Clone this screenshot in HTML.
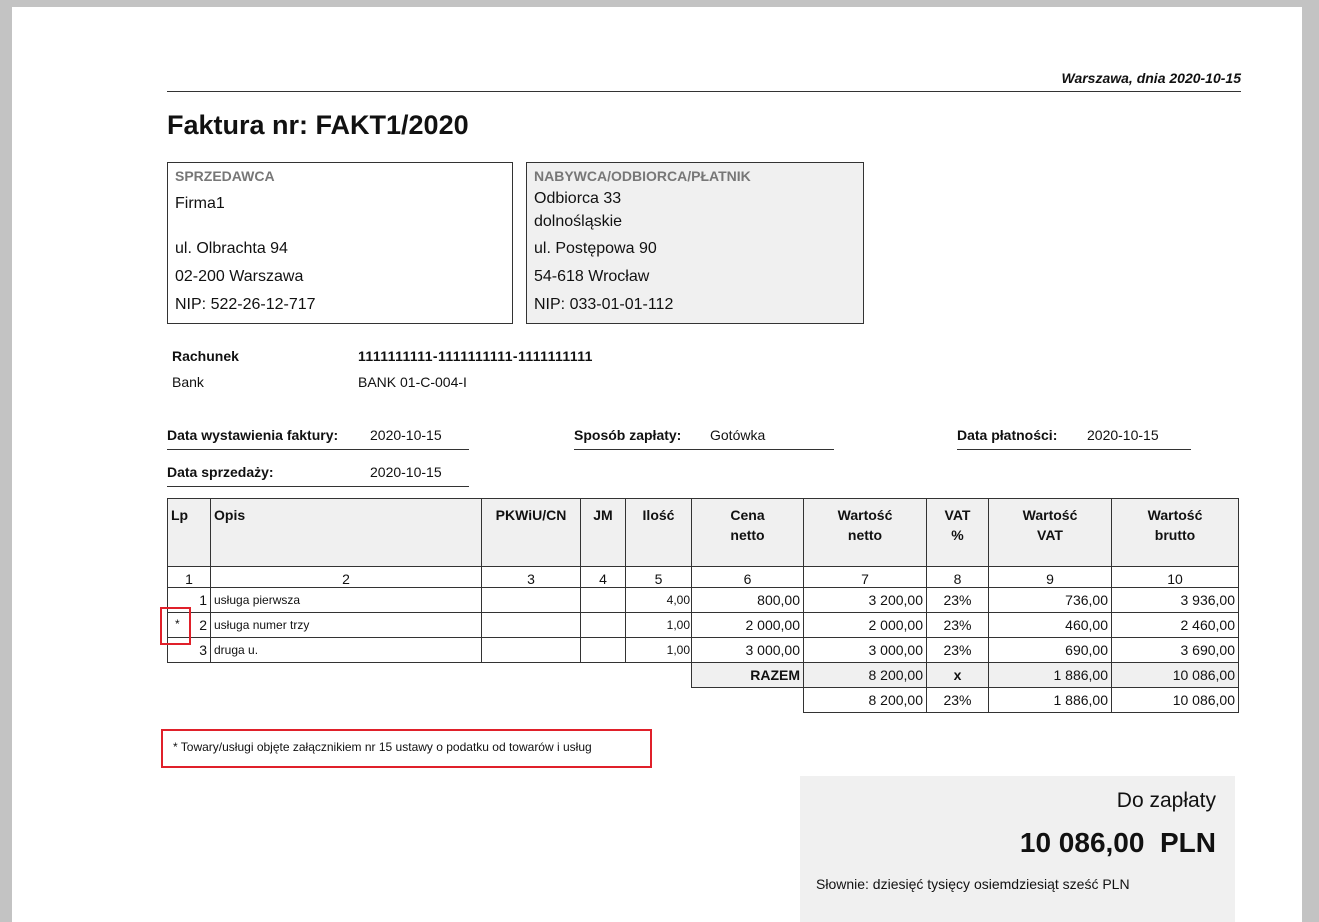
<!DOCTYPE html>
<html><head><meta charset="utf-8"><style>
*{margin:0;padding:0;box-sizing:border-box}
body{width:1319px;height:922px;background:#c3c3c3;position:relative;overflow:hidden;font-family:"Liberation Sans",sans-serif;color:#111}
.page{position:absolute;left:12px;top:7px;width:1290px;height:915px;background:#fff}
.a{position:absolute;white-space:nowrap}
.b{font-weight:bold}
.t{font-size:16px;line-height:20px}
table{position:absolute;left:167px;top:498px;border-collapse:collapse;table-layout:fixed;font-size:14px}
td{border:1px solid #333;padding:0 3px;height:25px;vertical-align:middle}
tr.h td{height:68px;background:#f0f0f0;font-weight:bold;text-align:center;vertical-align:top;padding-top:6px;line-height:20px}
tr.n td{height:21px;text-align:center;vertical-align:bottom;line-height:16px}
td.r{text-align:right}
td.c{text-align:center}
td.s{font-size:12px;text-align:left}
td.e{border:none}
.g{background:#f0f0f0}
</style></head><body>
<div class="page"></div>
<div class="a b" style="left:0;width:1241px;text-align:right;top:70px;font-size:14px;font-style:italic">Warszawa, dnia 2020-10-15</div>
<div class="a" style="left:167px;top:91px;width:1074px;height:1px;background:#333"></div>
<div class="a b" style="left:167px;top:110px;font-size:27px">Faktura nr: FAKT1/2020</div>

<div class="a" style="left:167px;top:162px;width:346px;height:162px;border:1px solid #333"></div>
<div class="a b" style="left:175px;top:168px;font-size:14px;color:#777">SPRZEDAWCA</div>
<div class="a t" style="left:175px;top:194px">Firma1</div>
<div class="a t" style="left:175px;top:239px">ul. Olbrachta 94</div>
<div class="a t" style="left:175px;top:267px">02-200 Warszawa</div>
<div class="a t" style="left:175px;top:295px">NIP: 522-26-12-717</div>

<div class="a g" style="left:526px;top:162px;width:338px;height:162px;border:1px solid #333"></div>
<div class="a b" style="left:534px;top:168px;font-size:14px;color:#777">NABYWCA/ODBIORCA/PŁATNIK</div>
<div class="a t" style="left:534px;top:189px">Odbiorca 33</div>
<div class="a t" style="left:534px;top:212px">dolnośląskie</div>
<div class="a t" style="left:534px;top:239px">ul. Postępowa 90</div>
<div class="a t" style="left:534px;top:267px">54-618 Wrocław</div>
<div class="a t" style="left:534px;top:295px">NIP: 033-01-01-112</div>

<div class="a b" style="left:172px;top:348px;font-size:14px">Rachunek</div>
<div class="a b" style="left:358px;top:348px;font-size:14px;letter-spacing:0.4px">1111111111-1111111111-1111111111</div>
<div class="a" style="left:172px;top:374px;font-size:14px">Bank</div>
<div class="a" style="left:358px;top:374px;font-size:14px">BANK 01-C-004-I</div>

<div class="a b" style="left:167px;top:427px;font-size:14px">Data wystawienia faktury:</div>
<div class="a" style="left:370px;top:427px;font-size:14px">2020-10-15</div>
<div class="a" style="left:167px;top:449px;width:302px;height:1px;background:#333"></div>
<div class="a b" style="left:574px;top:427px;font-size:14px">Sposób zapłaty:</div>
<div class="a" style="left:710px;top:427px;font-size:14px">Gotówka</div>
<div class="a" style="left:574px;top:449px;width:260px;height:1px;background:#333"></div>
<div class="a b" style="left:957px;top:427px;font-size:14px">Data płatności:</div>
<div class="a" style="left:1087px;top:427px;font-size:14px">2020-10-15</div>
<div class="a" style="left:957px;top:449px;width:234px;height:1px;background:#333"></div>
<div class="a b" style="left:167px;top:464px;font-size:14px">Data sprzedaży:</div>
<div class="a" style="left:370px;top:464px;font-size:14px">2020-10-15</div>
<div class="a" style="left:167px;top:486px;width:302px;height:1px;background:#333"></div>

<table>
<colgroup><col style="width:43px"><col style="width:271px"><col style="width:99px"><col style="width:45px"><col style="width:66px"><col style="width:112px"><col style="width:123px"><col style="width:62px"><col style="width:123px"><col style="width:127px"></colgroup>
<tr class="h"><td style="text-align:left">Lp</td><td style="text-align:left">Opis</td><td>PKWiU/CN</td><td>JM</td><td>Ilość</td><td>Cena<br>netto</td><td>Wartość<br>netto</td><td>VAT<br>%</td><td>Wartość<br>VAT</td><td>Wartość<br>brutto</td></tr>
<tr class="n"><td>1</td><td>2</td><td>3</td><td>4</td><td>5</td><td>6</td><td>7</td><td>8</td><td>9</td><td>10</td></tr>
<tr><td class="r">1</td><td class="s">usługa pierwsza</td><td></td><td></td><td class="r" style="font-size:12px;padding-right:1px">4,00</td><td class="r">800,00</td><td class="r">3 200,00</td><td class="c">23%</td><td class="r">736,00</td><td class="r">3 936,00</td></tr>
<tr><td class="r"><span style="float:left;font-size:12px;padding-left:4px">*</span>2</td><td class="s">usługa numer trzy</td><td></td><td></td><td class="r" style="font-size:12px;padding-right:1px">1,00</td><td class="r">2 000,00</td><td class="r">2 000,00</td><td class="c">23%</td><td class="r">460,00</td><td class="r">2 460,00</td></tr>
<tr><td class="r">3</td><td class="s">druga u.</td><td></td><td></td><td class="r" style="font-size:12px;padding-right:1px">1,00</td><td class="r">3 000,00</td><td class="r">3 000,00</td><td class="c">23%</td><td class="r">690,00</td><td class="r">3 690,00</td></tr>
<tr><td class="e"></td><td class="e"></td><td class="e"></td><td class="e"></td><td class="e" style="border-right:1px solid #333"></td><td class="r b g">RAZEM</td><td class="r g">8 200,00</td><td class="c b g">x</td><td class="r g">1 886,00</td><td class="r g">10 086,00</td></tr>
<tr><td class="e"></td><td class="e"></td><td class="e"></td><td class="e"></td><td class="e"></td><td class="e" style="border-right:1px solid #333"></td><td class="r">8 200,00</td><td class="c">23%</td><td class="r">1 886,00</td><td class="r">10 086,00</td></tr>
</table>

<div class="a" style="left:160px;top:607px;width:31px;height:38px;border:2px solid #e0202a"></div>
<div class="a" style="left:161px;top:729px;width:491px;height:39px;border:2px solid #e0202a"></div>
<div class="a" style="left:173px;top:740px;font-size:12px">* Towary/usługi objęte załącznikiem nr 15 ustawy o podatku od towarów i usług</div>

<div class="a g" style="left:800px;top:776px;width:435px;height:146px"></div>
<div class="a" style="left:800px;width:416px;text-align:right;top:789px;font-size:21px">Do zapłaty</div>
<div class="a b" style="left:800px;width:416px;text-align:right;top:827px;font-size:28px">10 086,00&nbsp; PLN</div>
<div class="a" style="left:816px;top:876px;font-size:14px">Słownie: dziesięć tysięcy osiemdziesiąt sześć PLN</div>
</body></html>
